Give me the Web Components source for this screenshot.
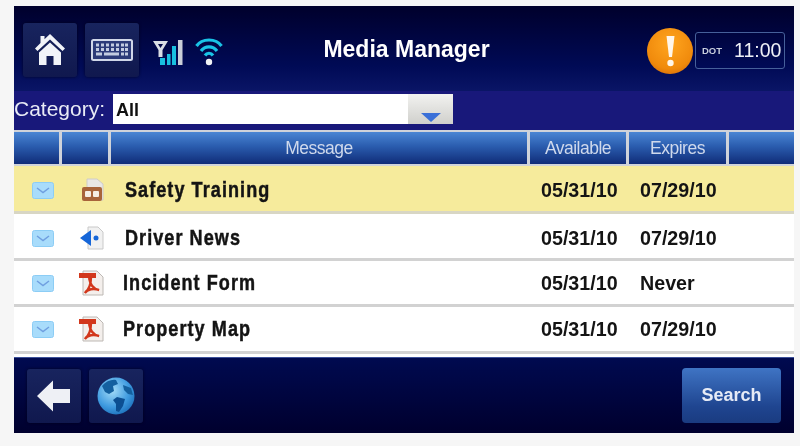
<!DOCTYPE html>
<html>
<head>
<meta charset="utf-8">
<title>Media Manager</title>
<style>
html, body { margin: 0; padding: 0; background: #f6f6f6; }
body { width: 800px; height: 446px; overflow: hidden; font-family: "Liberation Sans", Arial, sans-serif; }
</style>
</head>
<body>
<media-screen>
    <top-bar slot="top">
        <icon-button slot="left">
            <svg width="32" height="33" viewBox="0 0 32 33">
                <path d="M16 1 L31 15.500 L28.500 18 L16 6.500 L3.500 18 L1 15.500 L6.500 10 V3 H10.500 V6.300 Z" fill="#f2f4f8"/>
                <path d="M16 9.500 L27 19.500 V32 H19.500 V23 H12.500 V32 H5 V19.500 Z" fill="#f2f4f8"/>
            </svg>
        </icon-button>
        <icon-button slot="left">
            <svg width="42" height="22" viewBox="0 0 42 22">
                <rect x="1" y="1" width="40" height="20" rx="1.500" fill="#2b3a78" stroke="#d0d7e8" stroke-width="2"/>
                <g fill="#c2cbe0">
                    <rect x="5" y="4.500" width="3" height="3"/><rect x="10" y="4.500" width="3" height="3"/><rect x="15" y="4.500" width="3" height="3"/><rect x="20" y="4.500" width="3" height="3"/><rect x="25" y="4.500" width="3" height="3"/><rect x="30" y="4.500" width="3" height="3"/><rect x="34" y="4.500" width="3" height="3"/>
                    <rect x="5" y="9" width="3" height="3"/><rect x="10" y="9" width="3" height="3"/><rect x="15" y="9" width="3" height="3"/><rect x="20" y="9" width="3" height="3"/><rect x="25" y="9" width="3" height="3"/><rect x="30" y="9" width="3" height="3"/><rect x="34" y="9" width="3" height="3"/>
                    <rect x="5" y="13.500" width="6" height="3"/><rect x="13" y="13.500" width="15" height="3"/><rect x="30" y="13.500" width="3" height="3"/><rect x="34" y="13.500" width="3" height="3"/>
                </g>
            </svg>
        </icon-button>
        <svg slot="left" class="signal" width="30" height="25" viewBox="0 0 30 25">
            <path d="M0 1 H15 L9.500 10 V17 H5.500 V10 Z M5 4 L7.500 8 L10 4 Z" fill="#d9dde4" fill-rule="evenodd"/>
            <rect x="7" y="18" width="5" height="7" fill="#18bfe0"/>
            <rect x="14" y="14" width="3.500" height="11" fill="#18bfe0"/>
            <rect x="19" y="6" width="4" height="19" fill="#18bfe0"/>
            <rect x="25" y="0" width="4.500" height="25" fill="#c9ced8"/>
        </svg>
        <svg slot="left" class="wifi" width="28" height="29" viewBox="0 0 28 29">
            <g fill="none" stroke="#19c3e6" stroke-width="3.200">
                <path d="M1.500 9 C7 1 21 1 26.500 9"/>
                <path d="M6 14 C10 8.500 18 8.500 22 14"/>
                <path d="M10 18.500 C12 15.500 16 15.500 18 18.500"/>
            </g>
            <circle cx="14" cy="25" r="3.200" fill="#f0f2f5"/>
        </svg>
        <span slot="title">Media Manager</span>
        <alert-badge slot="right"></alert-badge>
        <clock-box slot="right" zone="DOT" time="11:00"></clock-box>
    </top-bar>
    <category-bar slot="top" label="Category:" value="All"></category-bar>
    <table-head slot="top"></table-head>
    <message-row slot="rows" style="--h:48px;--shift:3px;--inset:0px" kind="film" selected name="Safety Training" available="05/31/10" expires="07/29/10"></message-row>
    <message-row slot="rows" style="--h:47px;--shift:4px;--inset:0px" kind="audio" name="Driver News" available="05/31/10" expires="07/29/10"></message-row>
    <message-row slot="rows" style="--h:46px;--shift:1px;--inset:-2px" kind="pdf" name="Incident Form" available="05/31/10" expires="Never"></message-row>
    <message-row slot="rows" style="--h:47px;--shift:0px;--inset:-2px" kind="pdf" name="Property Map" available="05/31/10" expires="07/29/10"></message-row>
    <bottom-bar slot="bottom">
        <icon-button slot="left">
            <svg width="34" height="32" viewBox="0 0 34 32">
                <path d="M0 16 L16 0.500 V9 H33 V23 H16 V31.500 Z" fill="#eef0f5"/>
            </svg>
        </icon-button>
        <icon-button slot="left">
            <svg width="38" height="38" viewBox="0 0 38 38">
                <defs>
                    <radialGradient id="sea" cx="0.4" cy="0.35" r="0.75">
                        <stop offset="0" stop-color="#a4dcf8"/>
                        <stop offset="0.6" stop-color="#3f9be0"/>
                        <stop offset="1" stop-color="#1668b4"/>
                    </radialGradient>
                </defs>
                <circle cx="19" cy="19" r="18.500" fill="url(#sea)"/>
                <path d="M5 9 C9 4 15 2 19 3 L21 7 L16 9 L17 14 L12 17 L8 15 Z" fill="#14609f"/>
                <path d="M20 20 L28 22 L26 29 L22 35 L19 34 L19 27 L16 23 Z" fill="#0c4f92"/>
                <path d="M26 8 L34 11 L36 18 L31 17 L27 13 Z" fill="#14609f"/>
            </svg>
        </icon-button>
        <search-button slot="right">Search</search-button>
    </bottom-bar>
</media-screen>

<script>
// small helper so every element just gives its css + markup
class ShadowBase extends HTMLElement {
    constructor() {
        super();
        this.attachShadow({ mode: "open" });
    }
}

class MediaScreen extends ShadowBase {
    connectedCallback() {
        this.shadowRoot.innerHTML = `
        <style>
            :host {
                display: block;
                width: 780px;
                height: 427px;
                margin: 6px 0 0 14px;
                filter: blur(0.6px);
            }
            .wrap { display: flex; flex-direction: column; height: 100%; background: #fff; }
            .rows { display: flex; flex-direction: column; }
        </style>
        <div class="wrap">
            <slot name="top"></slot>
            <div class="rows"><slot name="rows"></slot></div>
            <slot name="bottom"></slot>
        </div>`;
    }
}

class TopBar extends ShadowBase {
    connectedCallback() {
        this.shadowRoot.innerHTML = `
        <style>
            :host {
                display: block;
                height: 85px;
                background: linear-gradient(#00002c, #000a55 70%, #0a1566);
                color: #fff;
            }
            .bar { display: grid; grid-template-columns: 1fr auto 1fr; align-items: center; height: 100%; padding: 0 9px; box-sizing: border-box; }
            .left { display: flex; align-items: center; gap: 8px; padding-top: 2px; }
            .right { display: flex; align-items: center; justify-content: flex-end; gap: 2px; padding-top: 4px; }
            .title { font-weight: bold; font-size: 23px; padding: 2px 0 0 5px; white-space: nowrap; }
            ::slotted(svg.signal) { margin-left: 6px; margin-top: 6px; }
            ::slotted(svg.wifi) { margin-left: 4px; margin-top: 4px; }
        </style>
        <div class="bar">
            <div class="left"><slot name="left"></slot></div>
            <div class="title"><slot name="title"></slot></div>
            <div class="right"><slot name="right"></slot></div>
        </div>`;
    }
}

class IconButton extends ShadowBase {
    connectedCallback() {
        this.shadowRoot.innerHTML = `
        <style>
            :host { display: block; }
            div {
                width: 54px;
                height: 54px;
                display: flex;
                align-items: center;
                justify-content: center;
                border-radius: 3px;
                background: linear-gradient(#18245e, #10184e);
                box-shadow: 0 0 3px rgba(0, 0, 20, 0.7);
            }
        </style>
        <div><slot></slot></div>`;
    }
}

class AlertBadge extends ShadowBase {
    connectedCallback() {
        this.shadowRoot.innerHTML = `
        <style>
            :host { display: block; }
            .ball {
                width: 46px;
                height: 46px;
                border-radius: 50%;
                background: radial-gradient(circle at 50% 35%, #ffa51e, #f08a0c 65%, #c85f05);
                display: flex;
                align-items: center;
                justify-content: center;
            }
            svg { display: block; }
        </style>
        <div class="ball">
            <svg width="9" height="32" viewBox="0 0 9 32">
                <path d="M0.500 1 H8.500 L6 22 H3 Z" fill="#fff6ea"/>
                <circle cx="4.500" cy="28" r="3.200" fill="#fff6ea"/>
            </svg>
        </div>`;
    }
}

class ClockBox extends ShadowBase {
    connectedCallback() {
        this.shadowRoot.innerHTML = `
        <style>
            :host { display: block; }
            .box {
                width: 90px;
                height: 37px;
                box-sizing: border-box;
                border: 1px solid #46609a;
                border-radius: 3px;
                display: flex;
                align-items: center;
                padding-left: 6px;
                gap: 12px;
                color: #eef1f7;
            }
            .zone { font-size: 9.500px; font-weight: bold; color: #c8cfdd; }
            .time { font-size: 19.500px; }
        </style>
        <div class="box">
            <span class="zone">${this.getAttribute("zone")}</span>
            <span class="time">${this.getAttribute("time")}</span>
        </div>`;
    }
}

class CategoryBar extends ShadowBase {
    connectedCallback() {
        this.shadowRoot.innerHTML = `
        <style>
            :host { display: block; height: 39px; background: #18187a; }
            .bar { display: flex; align-items: flex-start; padding-top: 3px; color: #e8ebf5; font-size: 21px; }
            label { width: 99px; flex: none; padding-top: 3px; white-space: nowrap; }
            .field { width: 340px; height: 30px; display: flex; background: #fff; color: #111; }
            .value { flex: 1; font-weight: bold; font-size: 18px; line-height: 32px; padding-left: 3px; }
            .drop {
                width: 45px;
                background: linear-gradient(#f2f2f0, #d0d0cc);
                display: flex;
                justify-content: center;
                align-items: flex-end;
                padding-bottom: 2px;
                box-sizing: border-box;
            }
            svg { display: block; }
        </style>
        <div class="bar">
            <label>${this.getAttribute("label")}</label>
            <div class="field">
                <div class="value">${this.getAttribute("value")}</div>
                <div class="drop">
                    <svg width="20" height="9" viewBox="0 0 20 9"><path d="M0 0 H20 L10 9 Z" fill="#3a70d8"/></svg>
                </div>
            </div>
        </div>`;
    }
}

class TableHead extends ShadowBase {
    connectedCallback() {
        this.shadowRoot.innerHTML = `
        <style>
            :host {
                display: block;
                height: 36px;
                background: #cfd3da;
                box-sizing: border-box;
                padding: 2px 0 0;
            }
            .row {
                display: grid;
                grid-template-columns: 45px 46px 416px 96px 97px 1fr;
                gap: 3px;
                height: 32px;
            }
            .cell {
                background: linear-gradient(#4a86d4, #2a5cae 45%, #102c78);
                color: #cfd9ec;
                font-size: 17.500px;
                line-height: 32px;
                text-align: center;
                letter-spacing: -0.5px;
            }
        </style>
        <div class="row">
            <div class="cell"></div>
            <div class="cell"></div>
            <div class="cell">Message</div>
            <div class="cell">Available</div>
            <div class="cell">Expires</div>
            <div class="cell"></div>
        </div>`;
    }
}

const ENVELOPE = `
    <svg width="22" height="17" viewBox="0 0 22 17">
        <rect x="0.500" y="0.500" width="21" height="16" rx="2" fill="#a8dcfb" stroke="#8ccdf5"/>
        <path d="M5 6 L11 10.500 L17 6" fill="none" stroke="#6f9fe0" stroke-width="1.500"/>
    </svg>`;

const FILE_ICONS = {
    film: `
    <svg width="24" height="24" viewBox="0 0 24 24" style="margin-left:3px">
        <path d="M6 1 H16 L22 6 V22 H6 Z" fill="#e9e7e4" stroke="#cfccc8"/>
        <rect x="1" y="9" width="20" height="14" rx="2" fill="#a8643a"/>
        <rect x="4" y="13" width="6" height="6" rx="1" fill="#f6eee4"/>
        <rect x="12" y="13" width="6" height="6" rx="1" fill="#f6eee4"/>
    </svg>`,
    audio: `
    <svg width="26" height="24" viewBox="0 0 26 24" style="margin-left:1px">
        <path d="M9 1 H19 L24 6 V23 H9 Z" fill="#f1f1f1" stroke="#c9c9c9"/>
        <path d="M1 12 L12 4 V20 Z" fill="#1666d8"/>
        <circle cx="17" cy="12" r="2.500" fill="#1666d8"/>
    </svg>`,
    pdf: `
    <svg width="26" height="26" viewBox="0 0 26 26">
        <path d="M5 1 H19 L25 7 V25 H5 Z" fill="#f4efec" stroke="#bdb8b4"/>
        <rect x="1" y="3" width="17" height="5" fill="#d2371c"/>
        <path d="M11 8 C12 14 15 19 21 20 C16 18 9 19 7 23 C10 20 13 14 13 8" fill="none" stroke="#d2371c" stroke-width="2.300"/>
    </svg>`
};

class MessageRow extends ShadowBase {
    connectedCallback() {
        const selected = this.hasAttribute("selected");
        this.shadowRoot.innerHTML = `
        <style>
            :host {
                display: block;
                height: var(--h);
                padding-top: var(--shift);
                box-sizing: border-box;
                background: ${selected ? "#f6eb9c" : "#fff"};
                border-bottom: 3px solid ${selected ? "#d8d6c4" : "#d2d2d2"};
                color: #141414;
            }
            .row {
                display: grid;
                grid-template-columns: 50px 47px 430px 99px 1fr;
                height: 100%;
                align-items: center;
            }
            .mail { padding-left: 18px; display: flex; }
            .file { padding-left: 14px; display: flex; }
            .name { padding-left: 14px; margin-left: var(--inset); }
            .name span {
                display: inline-block;
                font-weight: bold;
                font-size: 22px;
                letter-spacing: 1.300px;
                -webkit-text-stroke: 0.5px #141414;
                transform: scaleX(0.82);
                transform-origin: left;
                white-space: nowrap;
            }
            .date { font-weight: bold; font-size: 20.500px; transform: scaleX(0.96); transform-origin: left; }
            svg { display: block; }
        </style>
        <div class="row">
            <div class="mail">${ENVELOPE}</div>
            <div class="file">${FILE_ICONS[this.getAttribute("kind")]}</div>
            <div class="name"><span>${this.getAttribute("name")}</span></div>
            <div class="date">${this.getAttribute("available")}</div>
            <div class="date">${this.getAttribute("expires")}</div>
        </div>`;
    }
}

class BottomBar extends ShadowBase {
    connectedCallback() {
        this.shadowRoot.innerHTML = `
        <style>
            :host {
                display: block;
                height: 76px;
                margin-top: 3px;
                background: linear-gradient(#000a50, #00002e);
                border-top: 1px solid #3a4f98;
                box-sizing: border-box;
            }
            .bar { display: flex; justify-content: space-between; align-items: center; height: 100%; padding: 0 13px; }
            .left { display: flex; gap: 8px; }
        </style>
        <div class="bar">
            <div class="left"><slot name="left"></slot></div>
            <slot name="right"></slot>
        </div>`;
    }
}

class SearchButton extends ShadowBase {
    connectedCallback() {
        this.shadowRoot.innerHTML = `
        <style>
            :host { display: block; }
            button {
                display: block;
                width: 99px;
                height: 55px;
                border: 0;
                border-radius: 4px;
                background: linear-gradient(#3f74c4, #1f4590 70%, #1a3b80);
                color: #e6ebf6;
                font: bold 18px "Liberation Sans", Arial, sans-serif;
            }
        </style>
        <button><slot></slot></button>`;
    }
}

customElements.define("media-screen", MediaScreen);
customElements.define("top-bar", TopBar);
customElements.define("icon-button", IconButton);
customElements.define("alert-badge", AlertBadge);
customElements.define("clock-box", ClockBox);
customElements.define("category-bar", CategoryBar);
customElements.define("table-head", TableHead);
customElements.define("message-row", MessageRow);
customElements.define("bottom-bar", BottomBar);
customElements.define("search-button", SearchButton);
</script>
</body>
</html>
